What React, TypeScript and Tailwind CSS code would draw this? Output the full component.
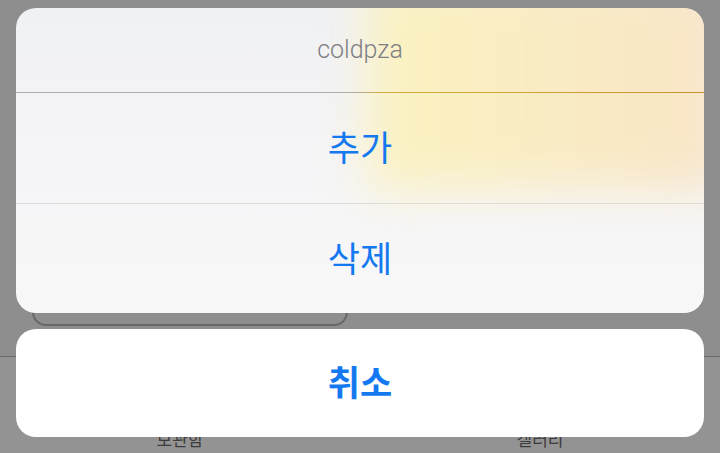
function BackgroundPage() {
  return (
    <div className="flex h-full flex-col">
      <div className="flex h-[357px] items-end border-b border-[#6c6c6c] pb-[30px] pl-[32px]">
        <div className="h-[90px] w-[316px] rounded-[14px] border-2 border-[#686868]" />
      </div>
      <div className="grid flex-1 grid-cols-2 bg-[#939393] pt-[72px] text-[17px] leading-[22px] text-[#3c3c3c]">
        <span className="text-center">보관함</span>
        <span className="text-center">갤러리</span>
      </div>
    </div>
  );
}

function ActionRow({ label }: { label: string }) {
  return (
    <div className="relative flex h-[110px] items-center justify-center text-[35px] font-normal text-[#1479f1]">
      {label}
    </div>
  );
}

export default function App() {
  return (
    <div
      className="relative h-[453px] w-[720px] overflow-hidden bg-[#8e8e8e]"
      style={{ fontFamily: '"Noto Sans", "Noto Sans CJK KR", sans-serif' }}
    >
      <BackgroundPage />

      <div className="absolute inset-0 flex flex-col gap-4 px-4 pt-2">
        {/* blurred sheet with the yellow glow of the content behind */}
        <div className="relative h-[305px] overflow-hidden rounded-[20px] bg-[linear-gradient(to_bottom,#f0f1f4,#f5f5f7_50%,#f8f8f9)]">
          <div className="absolute -right-6 -top-8 h-[215px] w-[360px] bg-[linear-gradient(to_right,#fbf2bf,#f9ebc4_55%,#f8e4c6)] blur-xl" />
          <div
            className="relative flex h-[84px] items-center justify-center text-[25px] font-light text-[#7f7f84]"
            style={{ fontFamily: "Roboto, sans-serif" }}
          >
            coldpza
          </div>
          <div className="relative h-px bg-[linear-gradient(to_right,#adadb0_49%,#d6ad45_53%,#c4952f)]" />
          <ActionRow label="추가" />
          <div className="relative h-px bg-[linear-gradient(to_right,#dcdcde,#dfdcd2)]" />
          <ActionRow label="삭제" />
        </div>

        <div className="flex h-[108px] items-center justify-center rounded-[20px] bg-white text-[35px] font-semibold text-[#1479f1]">
          취소
        </div>
      </div>
    </div>
  );
}
